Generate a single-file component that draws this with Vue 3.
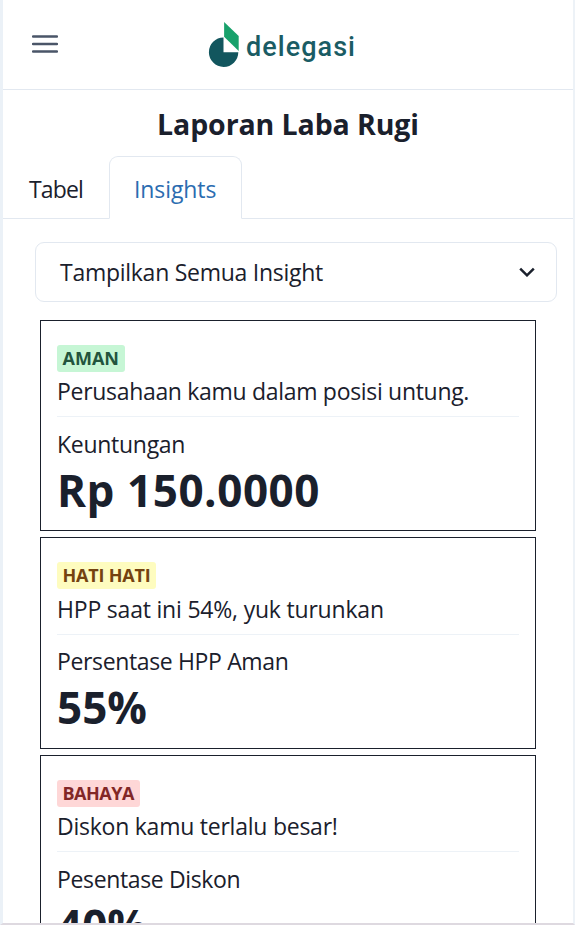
<script setup>
const tabs = [
  { label: 'Tabel', key: 'table', active: false },
  { label: 'Insights', key: 'insights', active: true },
]

const insights = [
  { tone: 'safe', status: 'AMAN', message: 'Perusahaan kamu dalam posisi untung.', label: 'Keuntungan', value: 'Rp 150.0000' },
  { tone: 'warn', status: 'HATI HATI', message: 'HPP saat ini 54%, yuk turunkan', label: 'Persentase HPP Aman', value: '55%' },
  { tone: 'danger', status: 'BAHAYA', message: 'Diskon kamu terlalu besar!', label: 'Pesentase Diskon', value: '40%' },
]
</script>

<template>
  <div class="screen">
    <header class="topbar">
      <button class="menu" aria-label="Menu">
        <svg width="26" height="20" viewBox="0 0 26 20">
          <path d="M1 2.5H25M1 10H25M1 17.5H25" stroke="#4a5568" stroke-width="2.4" stroke-linecap="round" />
        </svg>
      </button>
      <svg class="logo" width="150" height="50" viewBox="0 0 150 50">
        <path d="M15.5 17.5A14.7 14.7 0 1 0 30.3 32.3H15.5Z" fill="#12565e" />
        <path d="M16.1 2L30.7 16V31L16.1 16.8Z" fill="#18a16b" />
        <text class="wordmark" x="38" y="36" textLength="109" lengthAdjust="spacing">delegasi</text>
      </svg>
    </header>

    <main class="content">
      <h1 class="title">Laporan Laba Rugi</h1>
      <nav class="tabs">
        <button v-for="tab in tabs" :key="tab.key" class="tab" :class="[tab.key, { active: tab.active }]">
          <span>{{ tab.label }}</span>
        </button>
      </nav>
      <div class="filter">
        <span>Tampilkan Semua Insight</span>
        <svg width="16" height="10" viewBox="0 0 16 10">
          <path d="M1.2 1.6L8 8.3L14.8 1.6" fill="none" stroke="#1a202c" stroke-width="2.5" />
        </svg>
      </div>
      <section class="cards">
        <article v-for="item in insights" :key="item.status" class="card" :class="item.tone">
          <span class="badge">{{ item.status }}</span>
          <p class="message">{{ item.message }}</p>
          <p class="label">{{ item.label }}</p>
          <p class="value">{{ item.value }}</p>
        </article>
      </section>
    </main>
  </div>
</template>

<style>
body { background: #fff; overflow: hidden; }
</style>

<style scoped>
* { box-sizing: border-box; }
.screen {
  height: 925px;
  overflow: hidden;
  display: flex;
  flex-direction: column;
  border-left: 3px solid #ebf1f7;
  border-right: 2px solid #edf2f7;
  border-bottom: 2px solid #ded9e0;
  font-family: "Open Sans", "Noto Sans", sans-serif;
  font-size: 23px;
  color: #1a202c;
}
.topbar {
  flex: none;
  height: 90px;
  display: flex;
  align-items: center;
  gap: 150px;
  padding-left: 29px;
  border-bottom: 1px solid #e2e8f0;
}
button { padding: 0; border: 0; background: none; font: inherit; color: inherit; }
.menu { display: flex; width: 26px; margin-bottom: 2px; }
.logo { display: block; }
.wordmark { font: 500 27px Roboto, sans-serif; fill: #1a5c64; }
.content { flex: 1; min-height: 0; overflow: hidden; }
.title {
  margin: 0;
  height: 66px;
  padding-top: 16px;
  line-height: 36px;
  font-size: 28.5px;
  font-weight: 700;
  letter-spacing: -0.1px;
  text-align: center;
}
.tabs { display: flex; height: 63px; border-bottom: 1px solid #e2e8f0; }
.tab { height: 63px; padding: 3px 0 0 25px; text-align: left; border: 1px solid transparent; }
.tab.table { width: 106px; letter-spacing: -0.85px; }
.tab.insights { width: 133px; padding-left: 24px; letter-spacing: -0.1px; }
.tab.active {
  color: #2b6cb0;
  background: #fff;
  border-color: #e2e8f0;
  border-bottom-color: #fff;
  border-radius: 9px 9px 0 0;
}
.filter {
  display: flex;
  align-items: center;
  justify-content: space-between;
  height: 60px;
  margin: 23px 16px 0 32px;
  padding: 0 21px 0 24px;
  border: 1px solid #e2e8f0;
  border-radius: 9px;
  letter-spacing: -0.27px;
}
.cards { display: flex; flex-direction: column; gap: 6px; padding: 18px 37px 0 37px; }
.card {
  flex: none;
  width: 496px;
  height: 211px;
  display: flex;
  flex-direction: column;
  align-items: flex-start;
  padding: 24px 16px 0;
  border: 1px solid #1a202c;
}
.card.warn { height: 212px; }
.badge {
  height: 27px;
  padding: 0 5.5px;
  border-radius: 3px;
  font-size: 18px;
  line-height: 27px;
  font-weight: 700;
  white-space: nowrap;
}
.safe .badge { background: #c6f6d5; color: #22543d; width: 68px; }
.warn .badge { background: #fefcbf; color: #744210; width: 99px; letter-spacing: -0.2px; }
.danger .badge { background: #fed7d7; color: #822727; width: 83px; letter-spacing: -0.5px; }
p { margin: 0; white-space: nowrap; }
.message { width: 462px; height: 45px; line-height: 39px; border-bottom: 1px solid #edf2f7; letter-spacing: -0.31px; }
.warn .message { height: 46px; line-height: 41px; letter-spacing: -0.2px; }
.danger .message { letter-spacing: -0.24px; }
.label { height: 36px; margin-top: 10px; line-height: 35px; letter-spacing: -0.36px; }
.safe .label { letter-spacing: -0.28px; }
.warn .label { margin-top: 9px; }
.value { height: 56px; line-height: 54px; font-size: 44px; font-weight: 700; }
.safe .value { letter-spacing: 0.55px; }
</style>
